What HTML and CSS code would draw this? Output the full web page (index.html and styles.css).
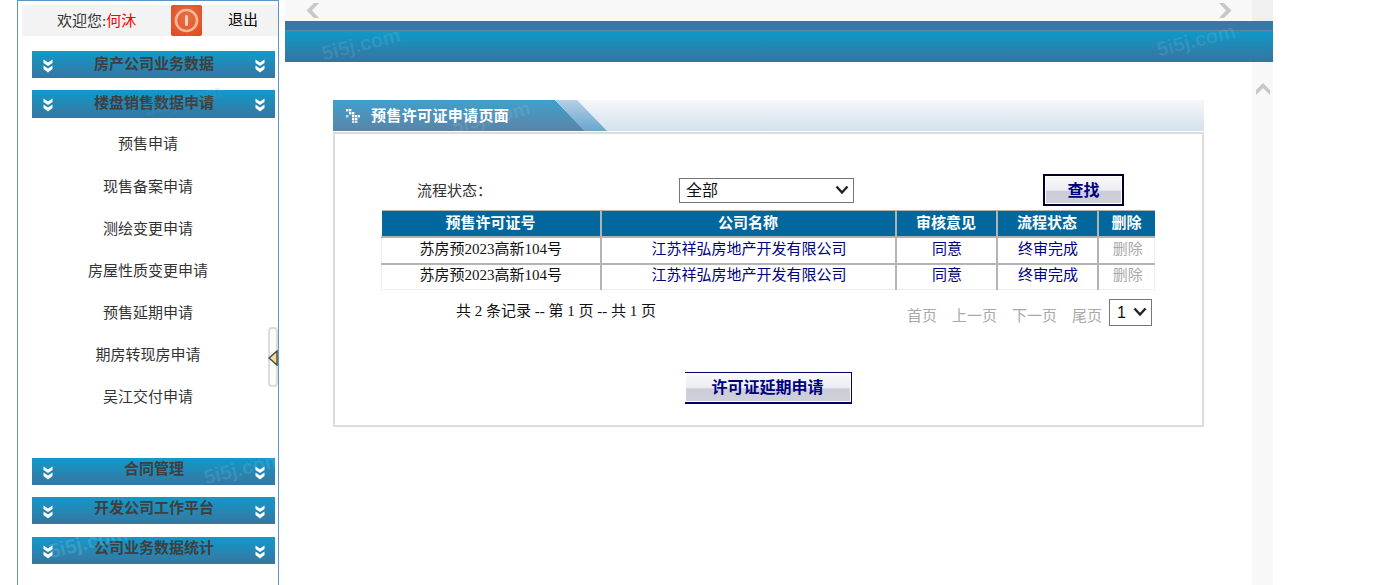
FILE: index.html
```html
<!DOCTYPE html>
<html lang="zh">
<head>
  <meta charset="UTF-8">
  <title>预售许可证申请页面</title>
  <link rel="stylesheet" href="styles.css">
</head>
<body>
  <svg class="defs" width="0" height="0">
    <symbol id="dbl" viewBox="0 0 10 14">
      <path d="M.5 .5 5 3.5 9.5 .5V4L5 7 .5 4Z M.5 6.5 5 9.5 9.5 6.5V10L5 13.5 .5 10Z" fill="#fff"/>
    </symbol>
  </svg>

  <div class="sidebar">
    <div class="userbar">
      <span class="hello">欢迎您:<em>何沐</em></span>
      <span class="power">
        <svg width="31" height="31" viewBox="0 0 31 31">
          <circle cx="15.5" cy="15.5" r="10.5" fill="none" stroke="#f3b795" stroke-width="2.6"/>
          <rect x="14" y="10" width="3" height="11" rx="1.5" fill="#f6d2bc"/>
        </svg>
      </span>
      <a class="logout">退出</a>
    </div>

    <div class="menu-head">
      <svg class="chev"><use href="#dbl"/></svg><span>房产公司业务数据</span><svg class="chev"><use href="#dbl"/></svg>
    </div>
    <div class="menu-head second">
      <svg class="chev"><use href="#dbl"/></svg><span>楼盘销售数据申请</span><svg class="chev"><use href="#dbl"/></svg>
    </div>
    <ul class="submenu">
      <li>预售申请</li>
      <li>现售备案申请</li>
      <li>测绘变更申请</li>
      <li>房屋性质变更申请</li>
      <li>预售延期申请</li>
      <li>期房转现房申请</li>
      <li>吴江交付申请</li>
    </ul>
    <div class="menu-head">
      <svg class="chev"><use href="#dbl"/></svg><span>合同管理</span><svg class="chev"><use href="#dbl"/></svg>
    </div>
    <div class="menu-head gap12">
      <svg class="chev"><use href="#dbl"/></svg><span>开发公司工作平台</span><svg class="chev"><use href="#dbl"/></svg>
    </div>
    <div class="menu-head gap13">
      <svg class="chev"><use href="#dbl"/></svg><span>公司业务数据统计</span><svg class="chev"><use href="#dbl"/></svg>
    </div>

    <div class="handle">
      <svg width="10" height="16" viewBox="0 0 10 16"><path d="M9 1V15L1 8Z" fill="#f4e08c" stroke="#444" stroke-width="1.4"/></svg>
    </div>
    <span class="wm wm-a">5i5j.com</span>
    <span class="wm wm-b">5i5j.com</span>
    <span class="wm wm-c">5i5j.com</span>
  </div>

  <div class="main">
    <div class="tabstrip">
      <svg width="14" height="15" viewBox="0 0 14 15"><path d="M8 0H13L6 7.5 13 15H8L.5 7.5Z" fill="#c8c8c8"/></svg>
      <svg width="14" height="15" viewBox="0 0 14 15"><path d="M1 0H6L13.5 7.5 6 15H1L8 7.5Z" fill="#c8c8c8"/></svg>
    </div>
    <div class="banner">
      <div class="banner-top"></div>
      <div class="banner-low"></div>
      <span class="wm wm-d">5i5j.com</span>
      <span class="wm wm-e">5i5j.com</span>
    </div>

    <div class="lower">
      <div class="content">
        <div class="panel-title">
          <div class="title-left">
            <svg width="14" height="14" viewBox="0 0 14 14" fill="#fff">
              <rect x="0" y="0" width="2.4" height="2.4"/><rect x="3" y="0" width="2.4" height="2.4"/>
              <rect x="3" y="3" width="2.4" height="2.4"/><rect x="6" y="3" width="2.4" height="2.4"/>
              <rect x="0" y="6" width="2.4" height="2.4" opacity=".7"/><rect x="6" y="6" width="2.4" height="2.4"/>
              <rect x="9" y="6" width="2.4" height="2.4"/><rect x="12" y="6" width="2" height="2.4"/>
              <rect x="6" y="9" width="2.4" height="2.4"/><rect x="9" y="9" width="2.4" height="2.4"/>
              <rect x="6" y="12" width="2.4" height="2" opacity=".8"/><rect x="9" y="12" width="2.4" height="2" opacity=".8"/>
            </svg>
            <span class="title-text">预售许可证申请页面</span>
            <span class="wm wm-f">5i5j.com</span>
          </div>
          <svg class="title-slant" width="52" height="31" viewBox="0 0 52 31">
            <defs>
              <linearGradient id="stripe" x1="0" y1="0" x2="0" y2="1">
                <stop offset="0" stop-color="#b4cfe6"/><stop offset="1" stop-color="#6aa6cd"/>
              </linearGradient>
              <linearGradient id="blue" x1="0" y1="0" x2="0" y2="1">
                <stop offset="0" stop-color="#3fa0cc"/><stop offset="1" stop-color="#5b84a8"/>
              </linearGradient>
            </defs>
            <path d="M0 0 30 31H0Z" fill="url(#blue)"/>
            <path d="M0 0H22L52 31H30Z" fill="url(#stripe)"/>
          </svg>
          <div class="title-rest"></div>
        </div>

        <div class="panel">
          <div class="search-row">
            <label class="status-label">流程状态：</label>
            <select class="status-select"><option>全部</option></select>
            <button class="btn btn-find" type="button">查找</button>
          </div>

          <table class="grid">
            <colgroup>
              <col class="c1"><col class="c2"><col class="c3"><col class="c4"><col class="c5">
            </colgroup>
            <thead>
              <tr><th>预售许可证号</th><th>公司名称</th><th>审核意见</th><th>流程状态</th><th>删除</th></tr>
            </thead>
            <tbody>
              <tr>
                <td>苏房预2023高新104号</td>
                <td class="link">江苏祥弘房地产开发有限公司</td>
                <td class="link">同意</td>
                <td class="link">终审完成</td>
                <td class="off">删除</td>
              </tr>
              <tr>
                <td>苏房预2023高新104号</td>
                <td class="link">江苏祥弘房地产开发有限公司</td>
                <td class="link">同意</td>
                <td class="link">终审完成</td>
                <td class="off">删除</td>
              </tr>
            </tbody>
          </table>

          <div class="pager">
            <span class="pager-info">共 2 条记录 -- 第 1 页 -- 共 1 页</span>
            <div class="pager-links">
              <a>首页</a><a>上一页</a><a>下一页</a><a>尾页</a>
              <select class="page-select"><option>1</option></select>
            </div>
          </div>

          <div class="apply-row">
            <button class="btn btn-apply" type="button">许可证延期申请</button>
          </div>
        </div>
      </div>
      <div class="scrollcol">
        <svg width="14" height="12" viewBox="0 0 14 12"><path d="M7 0 14 7V12L7 5 0 12V7Z" fill="#c8c8c8"/></svg>
      </div>
    </div>
  </div>
</body>
</html>
```

FILE: styles.css
```css
html, body { margin: 0; height: 585px; overflow: hidden; background: #fff; }
body {
  display: flex;
  font-family: "Liberation Serif", "Noto Sans CJK SC", serif;
  font-size: 15px;
  color: #333;
}
.defs { position: absolute; }

/* left menu */
.sidebar {
  position: relative;
  box-sizing: border-box;
  width: 262px;
  height: 585px;
  margin-left: 17px;
  padding: 4px 0 0 4px;
  border: 1px solid #5a96c8;
  border-bottom: 0;
}
.userbar {
  display: flex;
  align-items: center;
  height: 31px;
  background: #f3f3f3;
}
.hello { width: 149px; padding: 0 0 2px 35px; box-sizing: border-box; white-space: nowrap; }
.hello em { font-style: normal; color: #f00; }
.power {
  width: 31px;
  height: 31px;
  background: radial-gradient(circle at 50% 40%, #e8704a, #e0481c);
  border-radius: 2px;
}
.logout { margin-left: 26px; padding-bottom: 4px; color: #000; }
.menu-head {
  display: flex;
  align-items: center;
  justify-content: space-between;
  box-sizing: border-box;
  width: 243px;
  height: 27px;
  margin: 15px 0 0 10px;
  padding: 0 10px 0 11px;
  background: linear-gradient(#0f9aca, #38769f);
  font-weight: bold;
  color: #3f3f3f;
}
.menu-head.second { height: 28px; margin-top: 12px; }
.menu-head.gap12 { margin-top: 12px; }
.menu-head.gap13 { margin-top: 13px; }
.menu-head span { flex: 1; text-align: center; padding-bottom: 5px; }
.submenu ~ .menu-head span { padding-bottom: 8px; }
.chev { width: 10px; height: 14px; margin-top: 2px; }
.submenu {
  list-style: none;
  margin: 5px 0 0;
  padding: 0;
  height: 325px;
  width: 252px;
}
.submenu li { height: 42px; line-height: 42px; text-align: center; }
.submenu li:first-child { height: 43px; }
.submenu + .menu-head { margin-top: 10px; }
.handle {
  position: absolute;
  right: 0;
  top: 326px;
  box-sizing: border-box;
  width: 10px;
  height: 60px;
  padding-top: 21px;
  background: #fbfdf8;
  border: 2px solid #dcdcdc;
  border-radius: 4px;
}
.handle svg { display: block; margin-left: -2px; }

/* faint site marks over the bars */
.wm {
  position: absolute;
  font-family: "Liberation Sans", sans-serif;
  font-weight: bold;
  font-size: 20px;
  color: rgba(255, 255, 255, .09);
  transform: rotate(-14deg);
  white-space: nowrap;
  pointer-events: none;
}
.wm-a { left: 125px; top: 88px; color: rgba(120, 150, 180, .16); }
.wm-b { left: 30px; top: 530px; color: rgba(255, 255, 255, .14); }
.wm-c { left: 185px; top: 456px; color: rgba(255, 255, 255, .1); }
.wm-d { left: 36px; top: 12px; }
.wm-e { left: 871px; top: 8px; }
.wm-f { left: 118px; top: 6px; }

/* right side */
.main {
  display: flex;
  flex-direction: column;
  width: 988px;
  margin-left: 6px;
}
.tabstrip {
  display: flex;
  justify-content: space-between;
  align-items: center;
  box-sizing: border-box;
  height: 21px;
  padding: 0 41px 0 21px;
  background: linear-gradient(to right, #f8f8f8 967px, #f0f0f0 967px);
}
.banner { position: relative; height: 41px; }
.banner-top {
  height: 9px;
  background: #347aa5;
  border-bottom: 1px solid #5b88a5;
}
.banner-low { height: 31px; background: linear-gradient(#0d9aca, #39739e); }
.lower { flex: 1; display: flex; }
.content { flex: 1; min-width: 0; padding: 38px 48px 0; }
.scrollcol {
  width: 21px;
  background: #f8f8f8;
  display: flex;
  justify-content: center;
  align-items: flex-start;
  padding-top: 21px;
}

.panel-title { display: flex; height: 31px; }
.title-left {
  position: relative;
  display: flex;
  align-items: center;
  gap: 11px;
  width: 222px;
  padding-left: 13px;
  box-sizing: border-box;
  background: linear-gradient(#3fa0cc, #5b84a8);
  color: #fff;
  font-weight: bold;
}
.title-text { letter-spacing: .35px; padding-bottom: 3px; }
.title-slant { flex: none; background: linear-gradient(#f5f7fa, #d4e1ec); }
.title-rest { flex: 1; background: linear-gradient(#f5f7fa, #d4e1ec); }

.panel {
  box-sizing: border-box;
  height: 295px;
  margin-top: 1px;
  padding: 38px 40px 0 46px;
  border: 2px solid #dcdcdc;
}
.search-row { display: flex; align-items: center; height: 38px; }
.status-label { width: 298px; padding-left: 36px; box-sizing: border-box; margin-top: -4px; color: #333; }
.status-select, .page-select {
  appearance: none;
  box-sizing: border-box;
  border: 1px solid #767676;
  border-radius: 0;
  color: #111;
  font-family: "Liberation Sans", "Noto Sans CJK SC", sans-serif;
  font-size: 16px;
  background: #fff url("data:image/svg+xml,%3Csvg xmlns='http://www.w3.org/2000/svg' width='14' height='10'%3E%3Cpath d='M1.5 1.5 7 7.5 12.5 1.5' fill='none' stroke='%23222' stroke-width='2.4'/%3E%3C/svg%3E") no-repeat right 4px center;
}
.status-select {
  width: 175px;
  height: 25px;
  padding: 0 0 0 6px;
  margin-top: -2px;
}
.btn {
  font-family: "Liberation Serif", "Noto Sans CJK SC", serif;
  font-weight: bold;
  font-size: 16px;
  color: #000080;
  background: linear-gradient(#fafafa, #ecedf2 50%, #cdcdd8 55%, #cfd0da);
  cursor: pointer;
  padding: 0 0 2px;
}
.btn-find {
  width: 81px;
  height: 32px;
  margin: -3px 0 0 189px;
  border: 2px solid #00002a;
  box-shadow: inset 0 0 0 1px #fff;
}
.btn-apply {
  width: 167px;
  height: 32px;
  border: 0 solid #00006e;
  border-width: 1px 1px 2px 0;
  box-shadow: inset 0 0 0 1px #fff;
}

.grid {
  border-collapse: collapse;
  table-layout: fixed;
  width: 773px;
}
.c1 { width: 219px; } .c2 { width: 295px; } .c3 { width: 101px; }
.c4 { width: 101px; } .c5 { width: 57px; }
.grid th, .grid td { vertical-align: top; padding: 0; line-height: 21px; }
.grid th {
  height: 23px;
  padding-top: 2px;
  background: #01679c;
  color: #fff;
  font-size: 15px;
  border: 1px solid #b2b2b2;
  border-width: 1px 2px 2px 0;
}
.grid th:last-child { border-right: 0; }
.grid td {
  height: 25px;
  box-sizing: border-box;
  text-align: center;
  color: #111;
  border-right: 2px solid #b4b4b4;
  border-bottom: 2px solid #b4b4b4;
}
.grid tbody tr:first-child td { height: 27px; padding-top: 1px; }
.grid td:last-child { border-right: 1px solid #eee; }
.grid tbody tr:last-child td { border-bottom: 1px solid #eee; }
.grid td:first-child { border-left: 1px solid #eee; }
.grid .link { color: #000080; padding-left: 2px; }
.grid .off { color: #a9a9a9; padding-left: 3px; }

.pager { display: flex; justify-content: space-between; height: 66px; padding: 8px 0 0 75px; box-sizing: border-box; width: 771px; }
.pager-info { line-height: 27px; height: 27px; color: #111; }
.pager-links { display: flex; align-items: flex-start; color: #a9a9a9; }
.pager-links a { margin-right: 15px; line-height: 30px; margin-top: 3px; }
.pager-links a:nth-child(4) { margin-right: 7px; }
.page-select {
  width: 43px;
  height: 27px;
  margin-top: 1px;
  padding: 0 0 0 7px;
}
.apply-row { display: flex; justify-content: center; padding-top: 16px; width: 774px; }
```
